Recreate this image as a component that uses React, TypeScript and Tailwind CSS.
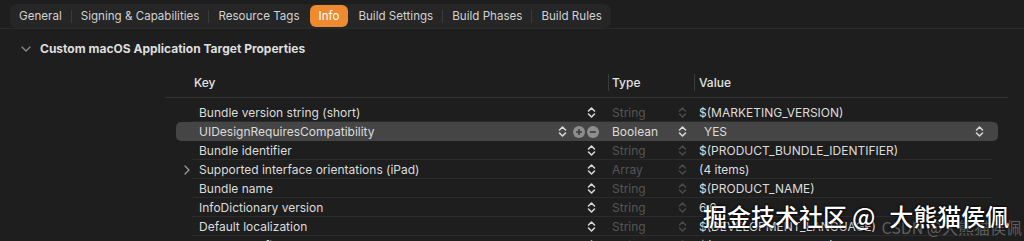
import React from "react";

const Stepper = ({ dim = false }: { dim?: boolean }) => (
  <svg width="9" height="13" viewBox="0 0 9 13" className="shrink-0">
    <path d="M1.5 5 L4.5 2 L7.5 5 M1.5 8 L4.5 11 L7.5 8" fill="none" stroke={dim ? "#4a4a4a" : "#d6d6d6"} strokeWidth="1.6" strokeLinecap="round" strokeLinejoin="round" />
  </svg>
);

const PlusCircle = () => (
  <svg width="12" height="12" viewBox="0 0 12 12" className="shrink-0">
    <circle cx="6" cy="6" r="6" fill="#8e8e8e" />
    <path d="M6 3 V9 M3 6 H9" stroke="#3c3c3c" strokeWidth="1.6" />
  </svg>
);
const MinusCircle = () => (
  <svg width="12" height="12" viewBox="0 0 12 12" className="shrink-0">
    <circle cx="6" cy="6" r="6" fill="#8e8e8e" />
    <path d="M3 6 H9" stroke="#3c3c3c" strokeWidth="1.6" />
  </svg>
);

type Row = { key: string; type: string; value: string; expand?: boolean; selected?: boolean };
const rows: Row[] = [
  { key: "Bundle version string (short)", type: "String", value: "$(MARKETING_VERSION)" },
  { key: "UIDesignRequiresCompatibility", type: "Boolean", value: "YES", selected: true },
  { key: "Bundle identifier", type: "String", value: "$(PRODUCT_BUNDLE_IDENTIFIER)" },
  { key: "Supported interface orientations (iPad)", type: "Array", value: "(4 items)", expand: true },
  { key: "Bundle name", type: "String", value: "$(PRODUCT_NAME)" },
  { key: "InfoDictionary version", type: "String", value: "6.0" },
  { key: "Default localization", type: "String", value: "$(DEVELOPMENT_LANGUAGE)" },
  { key: "Executable file", type: "String", value: "$(EXECUTABLE_NAME)" },
];

const tabs = ["General", "Signing & Capabilities", "Resource Tags", "Info", "Build Settings", "Build Phases", "Build Rules"];

export default function App() {
  return (
    <div
      className="relative w-[1024px] h-[241px] overflow-hidden bg-[#1e1e1e] text-[#dcdcdc]"
      style={{ fontFamily: "Inter, 'Liberation Sans', sans-serif" }}
    >
      {/* Tab bar */}
      <div className="h-[29px] border-b border-[#2a2a2a] pt-[2px] pl-[10px]">
        <div className="inline-flex h-[24px] items-center rounded-[7px] bg-[#262626] text-[11.6px] leading-[14px] text-[#d2d2d2]">
          {tabs.map((t, i) => {
            const active = t === "Info";
            const prevActive = i > 0 && tabs[i - 1] === "Info";
            return (
              <React.Fragment key={t}>
                {i > 0 && !active && !prevActive && <div className="h-[13px] w-px bg-[#3a3a3a]" />}
                {active ? (
                  <div className="mx-[1px] flex h-[22px] items-center rounded-[6px] bg-[#ee8a30] px-[9px] text-white">{t}</div>
                ) : (
                  <div className="px-[9px]">{t}</div>
                )}
              </React.Fragment>
            );
          })}
        </div>
      </div>

      {/* Section header */}
      <div className="mt-[11px] flex h-[18px] items-center pl-[21px]">
        <svg width="10" height="6" viewBox="0 0 10 6" className="mr-[9px]">
          <path d="M1 1 L5 5 L9 1" fill="none" stroke="#8a8a8a" strokeWidth="1.3" strokeLinecap="round" strokeLinejoin="round" />
        </svg>
        <span className="text-[12px] font-bold text-[#dedede]">Custom macOS Application Target Properties</span>
      </div>

      {/* Table */}
      <div className="ml-[165px] mt-[10px] w-[843px]">
        {/* Header */}
        <div className="flex h-[30px] items-center border-b border-[#333333] text-[12px] font-medium text-[#e2e2e2]">
          <div className="w-[443px] pl-[29px]">Key</div>
          <div className="h-[17px] w-px bg-[#3a3a3a]" />
          <div className="w-[85px] pl-[3px]">Type</div>
          <div className="h-[17px] w-px bg-[#3a3a3a]" />
          <div className="pl-[4px]">Value</div>
        </div>
        <div className="h-[5px]" />
        {rows.map((r) => (
          <div key={r.key} className="relative h-[19px]">
            <div
              className={
                "absolute inset-y-0 left-[11px] right-[10px] rounded-[5px] " + (r.selected ? "bg-[#454545]" : "")
              }
            />
            <div className="relative flex h-[19px] items-center text-[12px]">
              <div className="flex w-[34px] justify-end pr-[9px]">
                {r.expand && (
                  <svg width="6" height="10" viewBox="0 0 6 10">
                    <path d="M1 1 L5 5 L1 9" fill="none" stroke="#9a9a9a" strokeWidth="1.3" strokeLinecap="round" strokeLinejoin="round" />
                  </svg>
                )}
              </div>
              <div className="flex w-[401px] items-center">
                <span className="flex-1 text-[#dcdcdc]">{r.key}</span>
                {r.selected ? (
                  <div className="flex items-center pr-[1px]">
                    <Stepper />
                    <div className="w-[6px]" />
                    <PlusCircle />
                    <div className="w-[2px]" />
                    <MinusCircle />
                  </div>
                ) : (
                  <div className="pr-[4px]">
                    <Stepper />
                  </div>
                )}
              </div>
              <div className="flex w-[94px] items-center pl-[12px]">
                <span className={"flex-1 " + (r.selected ? "text-[#dcdcdc]" : "text-[#555555]")}>{r.type}</span>
                <div className="pr-[7px]">
                  <Stepper dim={!r.selected} />
                </div>
              </div>
              <div className={"flex flex-1 items-center " + (r.selected ? "pl-[10px] pr-[24px]" : "pl-[5px]")}>
                <span className="flex-1 text-[#dcdcdc]">{r.value}</span>
                {r.selected && <Stepper />}
              </div>
            </div>
            {!r.selected && <div className="absolute bottom-0 left-[27px] right-[16px] h-px bg-[#2b2b2b]" />}
          </div>
        ))}
      </div>

      {/* Watermark */}
      <div
        className="absolute right-[2px] top-[217px] whitespace-nowrap text-[16px] leading-[20px] text-[#5e5e5e]"
        style={{ fontFamily: "'Noto Sans CJK SC', sans-serif" }}
      >
        CSDN @大熊猫侯佩
      </div>
      <div
        className="absolute left-[703px] top-[202px] flex whitespace-nowrap text-[24px] font-medium leading-[28px] text-white"
        style={{ fontFamily: "'Noto Sans CJK SC', sans-serif", textShadow: "0 0 2px #000, 0 0 3px #000" }}
      >
        <span>掘金技术社区</span>
        <span className="ml-[5px]">@</span>
        <span className="ml-[14px]">大熊猫侯佩</span>
      </div>
    </div>
  );
}
